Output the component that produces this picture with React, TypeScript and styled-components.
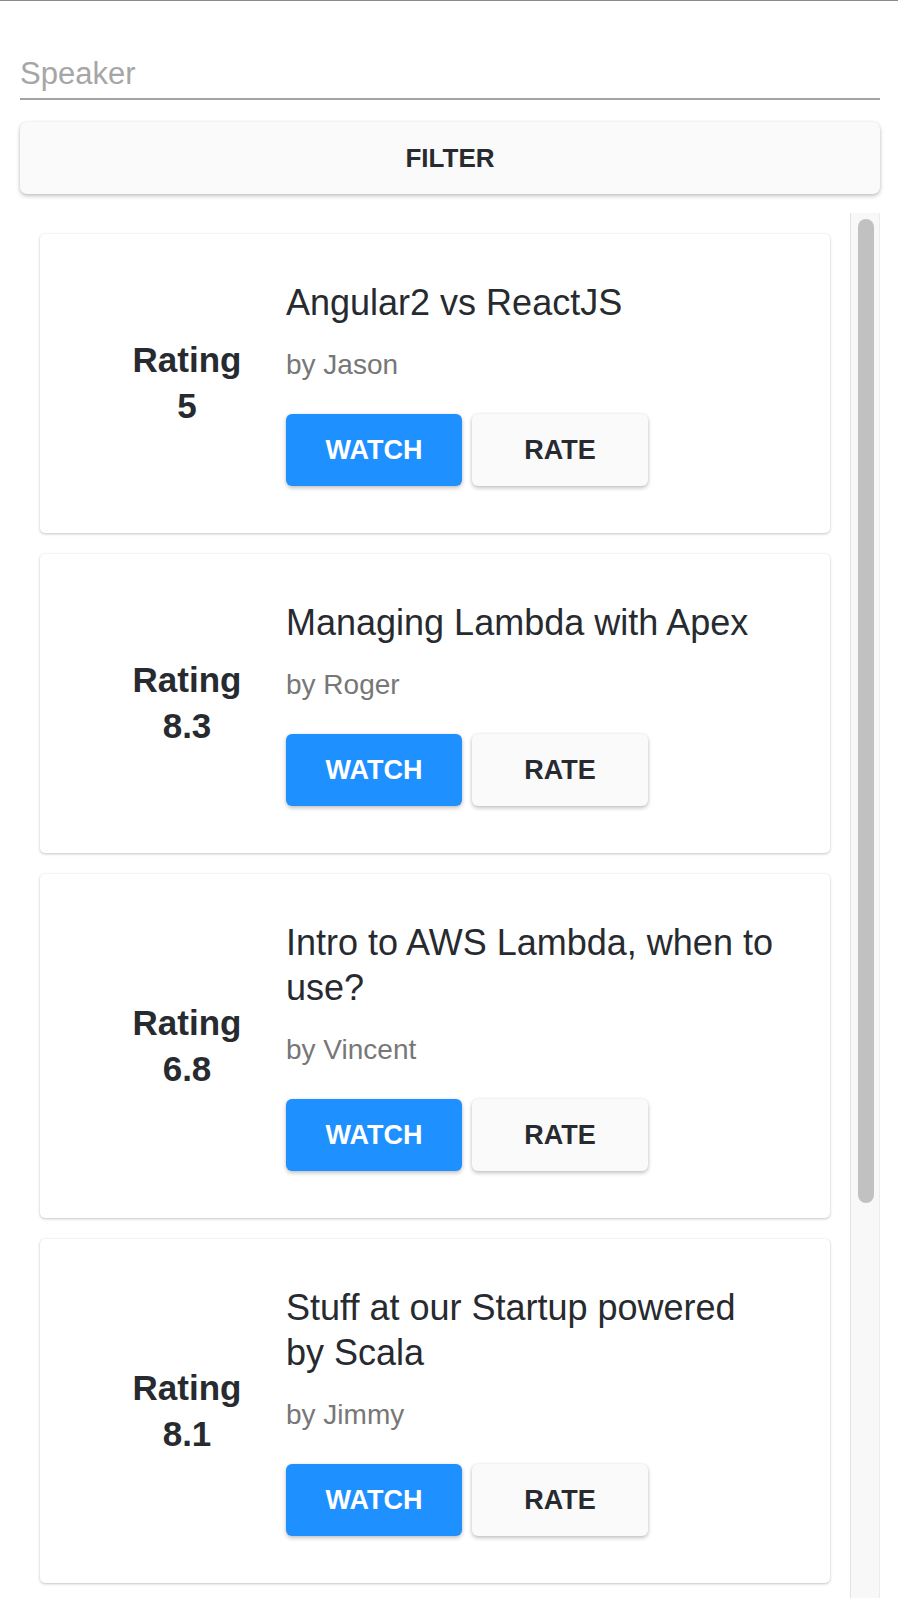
import React from "react";
import styled, { createGlobalStyle } from "styled-components";

const GlobalStyle = createGlobalStyle`
  * { box-sizing: border-box; }
  html, body {
    margin: 0;
    padding: 0;
    background: #ffffff;
  }
  body {
    font-family: "Liberation Sans", Arial, Helvetica, sans-serif;
    border-top: 1px solid #8a8a8a;
    overflow: hidden;
  }
`;

const Page = styled.div`
  display: flex;
  flex-direction: column;
  height: calc(100vh - 1px);
  padding: 0 18px 0 20px;
`;

const SpeakerInput = styled.input`
  display: block;
  width: 100%;
  height: 50px;
  margin: 49px 0 0;
  padding: 0;
  border: none;
  border-bottom: 2px solid #a3a3a3;
  background: transparent;
  font-family: "Liberation Sans", Arial, sans-serif;
  font-size: 31px;
  line-height: 48px;
  color: #333;
  outline: none;
  &::placeholder {
    color: #a6a6a6;
  }
`;

const FilterButton = styled.button`
  display: block;
  width: 100%;
  height: 72px;
  margin-top: 22px;
  flex-shrink: 0;
  border: none;
  border-radius: 7px;
  background: #fafafa;
  color: #272b2f;
  font-family: "Liberation Sans", Arial, sans-serif;
  font-weight: 700;
  font-size: 26px;
  letter-spacing: 0;
  text-transform: uppercase;
  box-shadow: 0 2px 4px rgba(0, 0, 0, 0.24), 0 0 3px rgba(0, 0, 0, 0.06);
  cursor: pointer;
`;

const ListArea = styled.div`
  flex: 1;
  min-height: 0;
  margin-top: 19px;
  display: flex;
`;

const TalkList = styled.div`
  flex: 1;
  min-width: 0;
  overflow: hidden;
  padding: 21px 20px 20px;
  display: flex;
  flex-direction: column;
  gap: 21px;
`;

const ScrollTrack = styled.div`
  width: 30px;
  flex-shrink: 0;
  background: #f8f8f8;
  border-left: 1px solid #e4e4e4;
  border-right: 1px solid #ececec;
  padding: 6px 5px 0 7px;
`;

const ScrollThumb = styled.div`
  height: 984px;
  border-radius: 8px;
  background: #c1c1c1;
`;

const Card = styled.div`
  flex-shrink: 0;
  display: flex;
  align-items: center;
  background: #ffffff;
  border-radius: 5px;
  padding: 46px 48px 47px;
  box-shadow: 0 1px 3px rgba(0, 0, 0, 0.22), 0 0 2px rgba(0, 0, 0, 0.07);
`;

const RatingCol = styled.div`
  width: 198px;
  flex-shrink: 0;
  text-align: center;
  font-weight: 700;
  font-size: 35px;
  line-height: 46px;
  color: #272b2f;
`;

const Content = styled.div`
  flex: 1;
  min-width: 0;
`;

const Title = styled.div`
  font-size: 36px;
  line-height: 45px;
  color: #272b2f;
`;

const Speaker = styled.div`
  margin-top: 23px;
  font-size: 28px;
  line-height: 34px;
  color: #777777;
`;

const Actions = styled.div`
  display: flex;
  gap: 10px;
  margin-top: 32px;
`;

const ActionButton = styled.button<{ $primary?: boolean }>`
  width: 176px;
  height: 72px;
  border: none;
  border-radius: 6px;
  background: ${(p) => (p.$primary ? "#1e90ff" : "#fafafa")};
  color: ${(p) => (p.$primary ? "#ffffff" : "#272b2f")};
  font-family: "Liberation Sans", Arial, sans-serif;
  font-weight: 700;
  font-size: 27px;
  text-transform: uppercase;
  box-shadow: 0 2px 4px rgba(0, 0, 0, 0.24), 0 0 3px rgba(0, 0, 0, 0.06);
  cursor: pointer;
`;

type Talk = { title: string; speaker: string; rating: string };

const talks: Talk[] = [
  { title: "Angular2 vs ReactJS", speaker: "Jason", rating: "5" },
  { title: "Managing Lambda with Apex", speaker: "Roger", rating: "8.3" },
  { title: "Intro to AWS Lambda, when to use?", speaker: "Vincent", rating: "6.8" },
  { title: "Stuff at our Startup powered by Scala", speaker: "Jimmy", rating: "8.1" },
];

export default function App() {
  return (
    <>
      <GlobalStyle />
      <Page>
        <SpeakerInput placeholder="Speaker" />
        <FilterButton>Filter</FilterButton>
        <ListArea>
          <TalkList>
            {talks.map((t) => (
              <Card key={t.title}>
                <RatingCol>
                  Rating
                  <br />
                  {t.rating}
                </RatingCol>
                <Content>
                  <Title>{t.title}</Title>
                  <Speaker>by {t.speaker}</Speaker>
                  <Actions>
                    <ActionButton $primary>Watch</ActionButton>
                    <ActionButton>Rate</ActionButton>
                  </Actions>
                </Content>
              </Card>
            ))}
          </TalkList>
          <ScrollTrack>
            <ScrollThumb />
          </ScrollTrack>
        </ListArea>
      </Page>
    </>
  );
}
